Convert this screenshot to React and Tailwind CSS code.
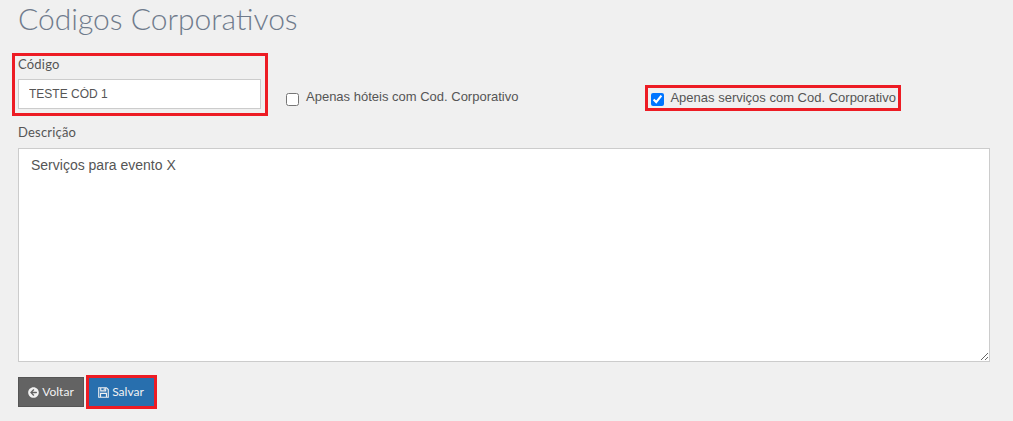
import React from "react";
import { FaArrowCircleLeft } from "react-icons/fa";

function FloppyIcon() {
  return (
    <svg viewBox="0 0 12 12" className="h-[11px] w-[11px]" fill="none" stroke="currentColor" strokeWidth="1.2">
      <path d="M1 .8h8.2l2 2v8.4H.8V.8z" />
      <path d="M3 1v3.2h5.4V1" />
      <path d="M2.8 11V7h6.4v4" />
      <path d="M6.8 1.4v2" />
    </svg>
  );
}

export default function App() {
  return (
    <div className="h-[421px] w-[1013px] overflow-hidden bg-[#f0f0f0] px-[18px] font-['Liberation_Sans',Arial,sans-serif] text-[#555]">
      <h1 className="h-[53px] pt-[1px] font-['Lato',sans-serif] text-[30px] font-light leading-[34px] text-[#6f7b8c]">
        Códigos Corporativos
      </h1>

      <div className="flex items-start">
        <div className="-ml-[6px] flex h-[63px] w-[256px] shrink-0 flex-col border-[3px] border-[#ed1c24] pl-[3px] pr-[4px]">
          <label className="h-[23px] font-['Lato',sans-serif] text-[13px] leading-[16px] tracking-[0.2px]">Código</label>
          <input
            readOnly
            value="TESTE CÓD 1"
            className="h-[30px] w-[243px] border border-[#ccc] bg-white px-[10px] text-[12px] text-[#555] outline-none"
          />
        </div>

        <label className="ml-[18px] mt-[34px] flex h-[20px] items-start text-[13px] leading-[20px]">
          <input type="checkbox" readOnly className="mr-[7px] mt-[6px] h-[13px] w-[13px]" />
          Apenas hóteis com Cod. Corporativo
        </label>

        <label className="ml-[127px] mt-[32px] flex h-[26px] items-start border-[3px] border-[#ed1c24] pl-[3px] pr-[2px] text-[13px] leading-[20px]">
          <input type="checkbox" readOnly checked className="mr-[6px] mt-[5px] h-[13px] w-[13px]" />
          Apenas serviços com Cod. Corporativo
        </label>
      </div>

      <label className="mt-[8px] block h-[24px] font-['Lato',sans-serif] text-[13px] leading-[16px] tracking-[0.2px]">Descrição</label>
      <textarea
        readOnly
        value="Serviços para evento X"
        className="block h-[214px] w-[972px] border border-[#ccc] bg-white px-[12px] py-[7px] text-[14px] leading-[18px] text-[#555] outline-none"
      />

      <div className="mt-[13px] flex items-center">
        <button className="flex h-[30px] w-[66px] items-center justify-center gap-[3px] border border-[#555] bg-[#636363] font-['Lato',sans-serif] text-[12px] text-[#f2f2f2]">
          <FaArrowCircleLeft className="h-[11px] w-[11px]" />
          Voltar
        </button>
        <div className="ml-[2px] border-[3px] border-[#ed1c24]">
          <button className="flex h-[28px] w-[65px] items-center justify-center gap-[3px] bg-[#286fae] pr-[1px] font-['Lato',sans-serif] text-[12px] text-[#f2f2f2]">
            <FloppyIcon />
            Salvar
          </button>
        </div>
      </div>
    </div>
  );
}
